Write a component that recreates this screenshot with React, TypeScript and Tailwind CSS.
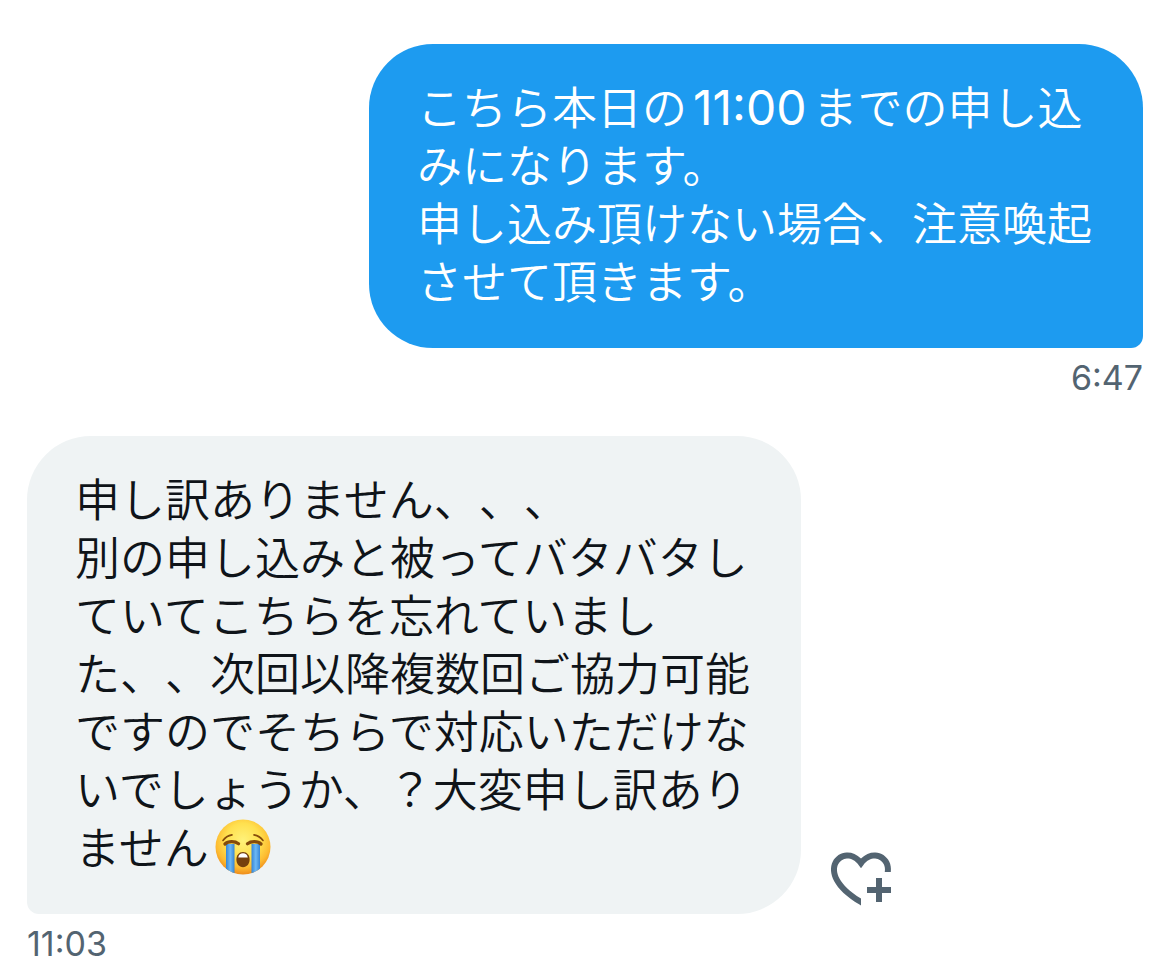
import clsx from "clsx";

type Message = {
  id: number;
  mine: boolean;
  time: string;
  body: React.ReactNode;
};

const CryingFace = () => (
  <svg
    role="img"
    aria-label="😭"
    viewBox="0 0 56 56"
    className="mt-0.5 ml-1.5 inline-block h-14 w-14 align-top"
  >
    <defs>
      <radialGradient id="face" cx="50%" cy="38%" r="62%">
        <stop offset="0" stopColor="#fff27a" />
        <stop offset="0.5" stopColor="#ffe04f" />
        <stop offset="0.8" stopColor="#fdbb31" />
        <stop offset="1" stopColor="#ee8c1b" />
      </radialGradient>
      <linearGradient id="tear" x1="0" y1="0" x2="1" y2="0">
        <stop offset="0" stopColor="#3585d6" />
        <stop offset="0.5" stopColor="#6db8f4" />
        <stop offset="1" stopColor="#3585d6" />
      </linearGradient>
      <clipPath id="head">
        <circle cx="28" cy="28" r="27.5" />
      </clipPath>
    </defs>
    <circle cx="28" cy="28" r="27.5" fill="url(#face)" />
    <g clipPath="url(#head)">
      <path d="M11 25h8.500v31h-8.500z" fill="url(#tear)" />
      <path d="M36.500 25h8.500v31h-8.500z" fill="url(#tear)" />
    </g>
    <g fill="none" stroke="#854b0b" strokeLinecap="round">
      <path d="M8 21.500c2-2.800 5-4.800 9-5.600M48 21.500c-2-2.800-5-4.800-9-5.600" strokeWidth="1.600" />
      <path d="M10 25c3-3 10-3 13.500-.3M46 25c-3-3-10-3-13.500-.3" strokeWidth="3.200" />
    </g>
    <path d="M28 33c4 0 6.600 3.200 6.600 7.600s-2.600 7.600-6.600 7.600-6.600-3.200-6.600-7.600 2.600-7.600 6.600-7.600z" fill="#75400d" />
    <path d="M23.200 38.500c.6-2.800 2.300-4.200 4.800-4.200s4.200 1.400 4.800 4.200z" fill="#fff" />
  </svg>
);

const HeartPlus = () => (
  <svg viewBox="0 0 24 24" className="h-18 w-18" fill="currentColor" aria-hidden="true">
    <path d="M17 12v3h-2.998v2h3v3h2v-3h3v-2h-3.001v-3H17zm-5 6.839c-3.871-2.34-6.053-4.639-7.127-6.609-1.112-2.04-1.031-3.7-.479-4.82.561-1.13 1.667-1.84 2.91-1.91 1.222-.06 2.68.51 3.892 2.16l.806 1.09.805-1.09c1.211-1.65 2.668-2.22 3.89-2.16 1.242.07 2.347.78 2.908 1.91.334.677.49 1.554.321 2.59h2.011c.153-1.283-.039-2.469-.539-3.48-.887-1.79-2.647-2.91-4.601-3.01-1.65-.09-3.367.56-4.796 2.01-1.43-1.45-3.147-2.1-4.798-2.01-1.954.1-3.714 1.22-4.601 3.01-.896 1.81-.846 4.17.514 6.67 1.353 2.48 4.003 5.12 8.382 7.67l.502.299v-2.32z" />
  </svg>
);

const messages: Message[] = [
  {
    id: 1,
    mine: true,
    time: "6:47",
    body: (
      <>
        こちら本日の
        <span className="mx-1.5 font-['Inter'] text-5xl leading-none font-normal">11:00</span>
        までの申し込みになります。
        <br />
        申し込み頂けない場合、注意喚起させて頂きます。
      </>
    ),
  },
  {
    id: 2,
    mine: false,
    time: "11:03",
    body: (
      <>
        申し訳ありません、、、
        <br />
        別の申し込みと被ってバタバタしていてこちらを忘れていました、、次回以降複数回ご協力可能ですのでそちらで対応いただけないでしょうか、？大変申し訳ありません
        <CryingFace />
      </>
    ),
  },
];

const MessageRow = ({ mine, time, body }: Message) => (
  <li className={clsx("flex flex-col", mine ? "items-end" : "items-start")}>
    <div className="flex items-end gap-6">
      <p
        className={clsx(
          "max-w-[774px] rounded-[64px] px-12 pt-[33px] pb-[39px] text-[45px] leading-[58px] font-[350] [text-spacing-trim:space-all]",
          mine
            ? "rounded-br-xl bg-[#1d9bf0] text-white"
            : "rounded-bl-xl bg-[#eff3f4] text-[#0f1419]"
        )}
      >
        {body}
      </p>
      {!mine && (
        <button type="button" aria-label="リアクションを追加" className="shrink-0 text-[#536471]">
          <HeartPlus />
        </button>
      )}
    </div>
    <time className="mt-2.5 font-['Inter'] text-[34px] leading-10 text-[#536471]">{time}</time>
  </li>
);

export default function App() {
  return (
    <main className="bg-white px-[27px] pt-11 font-['Noto_Sans_CJK_JP',sans-serif]" lang="ja">
      <ul className="flex flex-col gap-[38px]">
        {messages.map((m) => (
          <MessageRow key={m.id} {...m} />
        ))}
      </ul>
    </main>
  );
}
